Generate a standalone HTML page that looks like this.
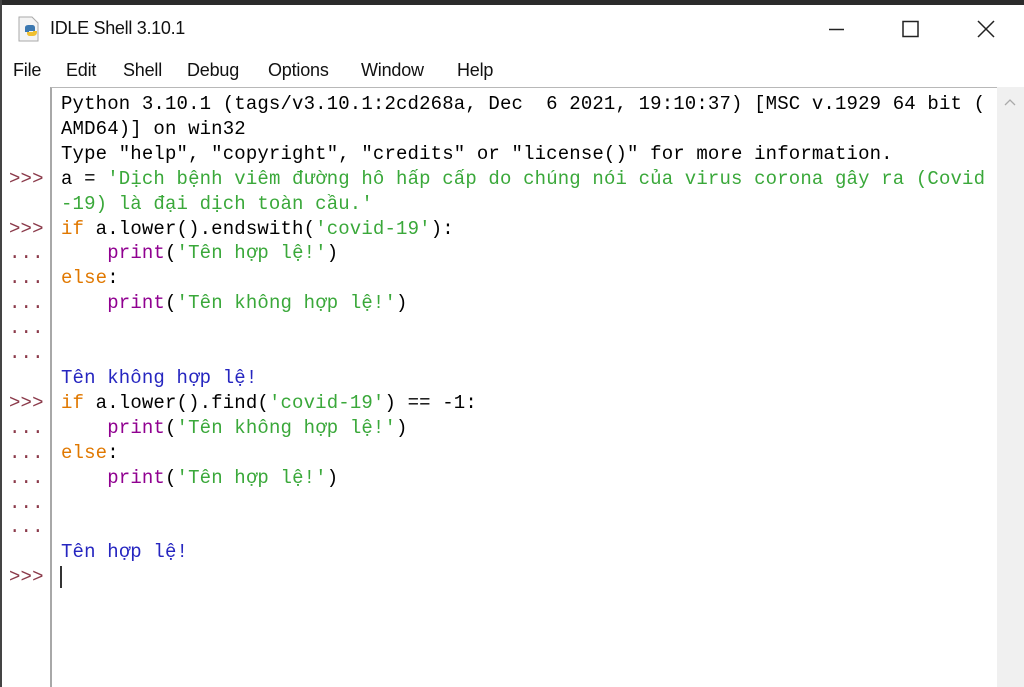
<!DOCTYPE html>
<html><head><meta charset="utf-8"><style>
*{margin:0;padding:0;box-sizing:border-box}
body{width:1024px;height:687px;overflow:hidden;background:#fff;position:relative;font-family:"Segoe UI","Liberation Sans",sans-serif}
.topbar{position:absolute;left:0;top:0;width:1024px;height:5px;background:#2b2b2b}
.lb{position:absolute;left:0;top:0;width:2px;height:687px;background:#444}
.title{position:absolute;left:50px;top:18px;font-size:18px;color:#111;letter-spacing:-0.3px}
.menu{position:absolute;top:60px;left:13px;font-size:18px;color:#111;letter-spacing:-0.2px}
.menu span{position:absolute;white-space:nowrap}
.ta{position:absolute;left:50px;top:87px;width:947px;height:600px;border-top:1px solid #b8b8b8;border-left:2px solid #a8a8a8}
.sb{position:absolute;left:997px;top:87px;width:27px;height:600px;background:#f0f0f0}
pre{font-family:"Liberation Mono","DejaVu Sans Mono",monospace;font-size:19px;line-height:24.9px;position:absolute;top:92px;white-space:pre;letter-spacing:0.15px}
.code{left:61px;color:#000}
.gut{left:9px;color:#8b3a4a}
.s{color:#3aa83a}.k{color:#e07800}.b{color:#900090}.o{color:#2626c0}
</style></head><body>
<div class="topbar"></div><div class="lb"></div>
<svg style="position:absolute;left:16px;top:16px" width="26" height="26" viewBox="0 0 26 26">
<path d="M3 1h13l6 6v18H3z" fill="#f4f4f4" stroke="#aaa"/>
<path d="M9 12c0-2 1-3 4-3h3c2 0 3 1 3 3v3h-6v1h-4z" fill="#3c78b0"/>
<path d="M21 16c0 2-1 4-4 4h-3c-2 0-3-1-3-3v-1h6v-1h4z" fill="#f0c030"/>
</svg>
<div class="title">IDLE Shell 3.10.1</div>
<svg style="position:absolute;left:820px;top:18px" width="190" height="24" viewBox="0 0 190 24">
<line x1="9" y1="11.5" x2="24" y2="11.5" stroke="#222" stroke-width="1.5"/>
<rect x="83" y="3.5" width="15" height="15" fill="none" stroke="#222" stroke-width="1.5"/>
<path d="M158 3l16 16M174 3l-16 16" stroke="#222" stroke-width="1.5"/>
</svg>
<div class="menu">
<span style="left:0">File</span><span style="left:53px">Edit</span><span style="left:110px">Shell</span><span style="left:174px">Debug</span><span style="left:255px">Options</span><span style="left:348px">Window</span><span style="left:444px">Help</span>
</div>
<div class="ta"></div>
<div class="sb"><svg style="position:absolute;left:5px;top:10px" width="16" height="10"><path d="M3 8l5-5 5 5" fill="none" stroke="#aaa" stroke-width="1.3"/></svg></div>
<pre class="gut">&nbsp;


&gt;&gt;&gt;

&gt;&gt;&gt;
...
...
...
...
...

&gt;&gt;&gt;
...
...
...
...
...

&gt;&gt;&gt;</pre>
<pre class="code">Python 3.10.1 (tags/v3.10.1:2cd268a, Dec  6 2021, 19:10:37) [MSC v.1929 64 bit (
AMD64)] on win32
Type "help", "copyright", "credits" or "license()" for more information.
a = <span class="s">'Dịch bệnh viêm đường hô hấp cấp do chúng nói của virus corona gây ra (Covid</span>
<span class="s">-19) là đại dịch toàn cầu.'</span>
<span class="k">if</span> a.lower().endswith(<span class="s">'covid-19'</span>):
    <span class="b">print</span>(<span class="s">'Tên hợp lệ!'</span>)
<span class="k">else</span>:
    <span class="b">print</span>(<span class="s">'Tên không hợp lệ!'</span>)


<span class="o">Tên không hợp lệ!</span>
<span class="k">if</span> a.lower().find(<span class="s">'covid-19'</span>) == -1:
    <span class="b">print</span>(<span class="s">'Tên không hợp lệ!'</span>)
<span class="k">else</span>:
    <span class="b">print</span>(<span class="s">'Tên hợp lệ!'</span>)


<span class="o">Tên hợp lệ!</span>
</pre>
<div style="position:absolute;left:60px;top:566px;width:2px;height:22px;background:#333"></div>
</body></html>
